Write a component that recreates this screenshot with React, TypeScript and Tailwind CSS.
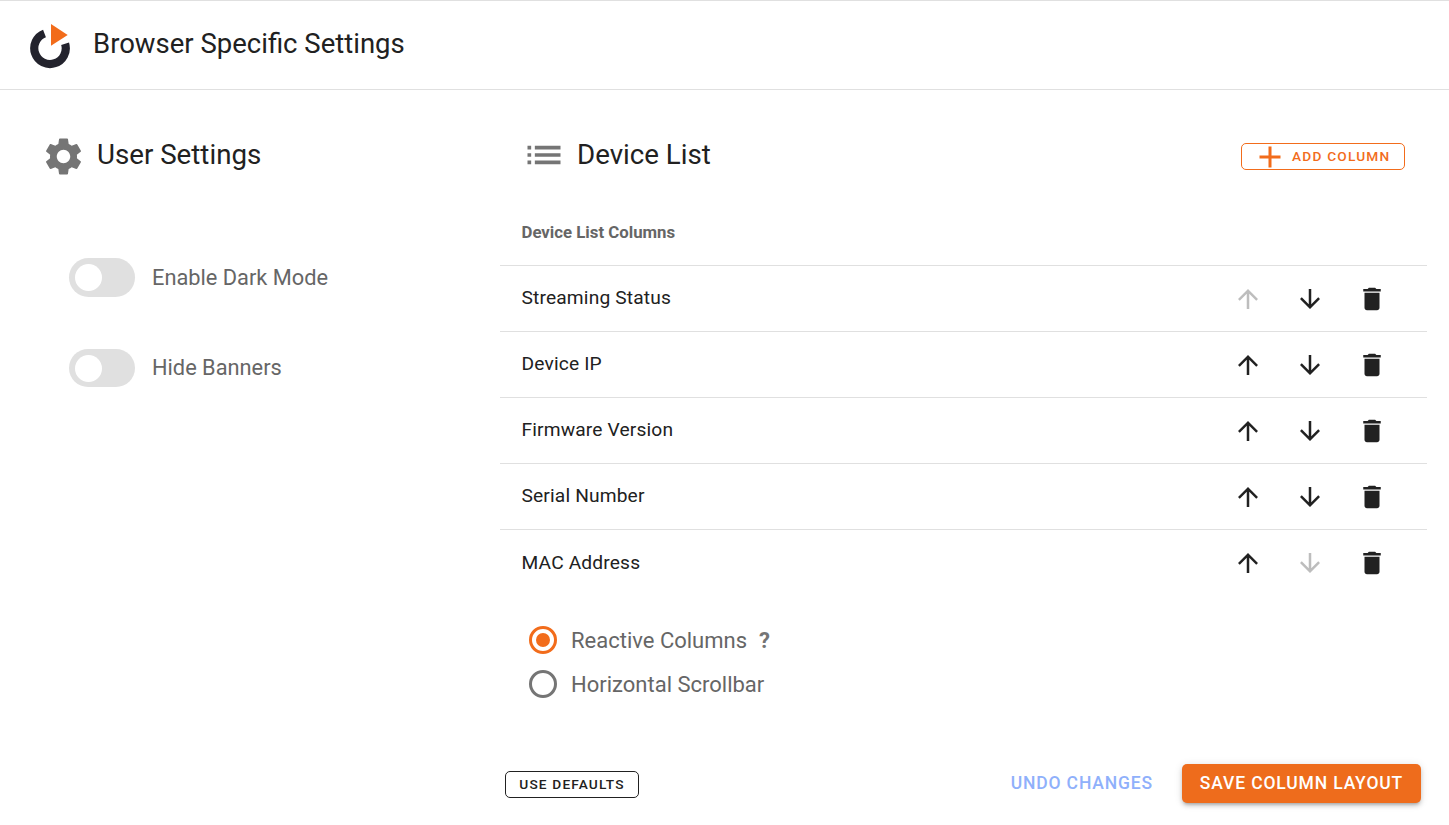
import { MdAdd, MdArrowDownward, MdArrowUpward, MdDelete, MdList, MdSettings } from "react-icons/md";

const columns = ["Streaming Status", "Device IP", "Firmware Version", "Serial Number", "MAC Address"];

const Logo = () => (
  <svg width="42" height="46" viewBox="0 0 42 46" className="shrink-0 mt-[2px]">
    <path d="M15.5 10.5 A15.75 15.75 0 1 0 36.1 20.7" fill="none" stroke="#23232d" strokeWidth="8.2" />
    <path d="M22 1 L38.7 12 L22 22.7 Z" fill="#f26c1b" />
  </svg>
);

const Toggle = ({ label, first }: { label: string; first?: boolean }) => (
  <div className="flex items-center">
    <div className={first ? "w-[66px] h-[39px] rounded-full bg-[#e0e0e0] flex items-center pl-[6px]" : "w-[66px] h-[38px] rounded-full bg-[#e0e0e0] flex items-center pl-[6px]"}>
      <div className="w-[27px] h-[27px] rounded-full bg-white" />
    </div>
    <span className={first ? "ml-[17px] mt-[1px] text-[21.8px] text-[#666666]" : "ml-[17px] text-[21.8px] text-[#666666]"}>{label}</span>
  </div>
);

const Row = ({ label, first, last }: { label: string; first: boolean; last: boolean }) => (
  <div className="h-[66px] border-t border-[#e0e0e0] flex items-center pl-[21.5px] pr-[40px]">
    <span className={last ? "flex-1 mt-[1px] text-[19.2px] text-[#212121] tracking-[0.15px]" : "flex-1 text-[19.2px] text-[#212121] tracking-[0.15px] -mt-[1px]"}>{label}</span>
    <div className="flex items-center gap-[32px]">
      <MdArrowUpward size={30} className={first ? "text-[#bdbdbd]" : "text-[#212121]"} />
      <MdArrowDownward size={30} className={last ? "text-[#bdbdbd]" : "text-[#212121]"} />
      <MdDelete size={30} className="text-[#212121]" />
    </div>
  </div>
);

export default function App() {
  return (
    <div className="w-[1449px] h-[825px] overflow-hidden bg-white font-['Roboto',sans-serif]">
      <header className="h-[90px] border-t border-b border-[#e0e0e0] flex items-center pl-[29px]">
        <Logo />
        <h1 className="ml-[22px] -mt-[3px] text-[27.5px] text-[#212121]">Browser Specific Settings</h1>
      </header>

      <main className="flex">
        {/* User settings */}
        <section className="w-[500px] pl-[41px] pt-[45px]">
          <div className="flex items-center h-[40px]">
            <MdSettings size={45} className="text-[#757575] mt-[2px]" />
            <h2 className="ml-[11px] text-[27.7px] text-[#212121]">User Settings</h2>
          </div>
          <div className="pl-[28px] pt-[83px] flex flex-col gap-[52px]">
            <Toggle label="Enable Dark Mode" first />
            <Toggle label="Hide Banners" />
          </div>
        </section>

        {/* Device list */}
        <section className="w-[927px]">
          <div className="flex items-center justify-between pt-[45px] pr-[22px] pl-[22px]">
            <div className="flex items-center h-[40px]">
              <MdList size={44} className="text-[#757575]" />
              <h2 className="ml-[11px] text-[27.7px] text-[#212121]">Device List</h2>
            </div>
            <button className="h-[27px] w-[164px] border border-[#f26c1b] rounded-[5px] flex items-center pl-[10px] text-[#f26c1b] mt-[3px]">
              <MdAdd size={36} />
              <span className="ml-[4px] text-[13.7px] font-medium tracking-[1.2px]">ADD COLUMN</span>
            </button>
          </div>
          <div className="h-[90px] flex items-center pl-[21.5px] pt-[26px] text-[16.8px] font-bold text-[#666666]">Device List Columns</div>
          {columns.map((c, i) => (
            <Row key={c} label={c} first={i === 0} last={i === columns.length - 1} />
          ))}

          <div className="pl-[29px] pt-[31px] flex flex-col gap-[16px]">
            <div className="flex items-center h-[28px]">
              <div className="w-[28px] h-[28px] rounded-full border-[3px] border-[#f26c1b] flex items-center justify-center">
                <div className="w-[14px] h-[14px] rounded-full bg-[#f26c1b]" />
              </div>
              <span className="ml-[14px] text-[22px] text-[#666666]">Reactive Columns</span>
              <span className="ml-[12px] text-[22px] font-bold text-[#757575]">?</span>
            </div>
            <div className="flex items-center h-[28px]">
              <div className="w-[28px] h-[28px] rounded-full border-[3px] border-[#757575]" />
              <span className="ml-[14px] text-[22px] text-[#666666]">Horizontal Scrollbar</span>
            </div>
          </div>

          <div className="flex items-center justify-between pl-[5px] pr-[6px] pt-[66px]">
            <button className="h-[27px] w-[134px] mt-[2px] border border-[#212121] rounded-[5px] text-[13.7px] font-medium tracking-[1.15px] text-[#212121]">USE DEFAULTS</button>
            <div className="flex items-center gap-[29px]">
              <span className="text-[17.5px] font-medium tracking-[0.85px] text-[#8fb0fb]">UNDO CHANGES</span>
              <button className="h-[39px] w-[239px] rounded-[5px] bg-[#ee6c1c] text-white text-[17.5px] font-medium tracking-[0.85px] shadow-[0_3px_3px_-2px_rgba(0,0,0,0.2),0_3px_4px_0_rgba(0,0,0,0.14),0_1px_8px_0_rgba(0,0,0,0.12)]">SAVE COLUMN LAYOUT</button>
            </div>
          </div>
        </section>
      </main>
    </div>
  );
}
